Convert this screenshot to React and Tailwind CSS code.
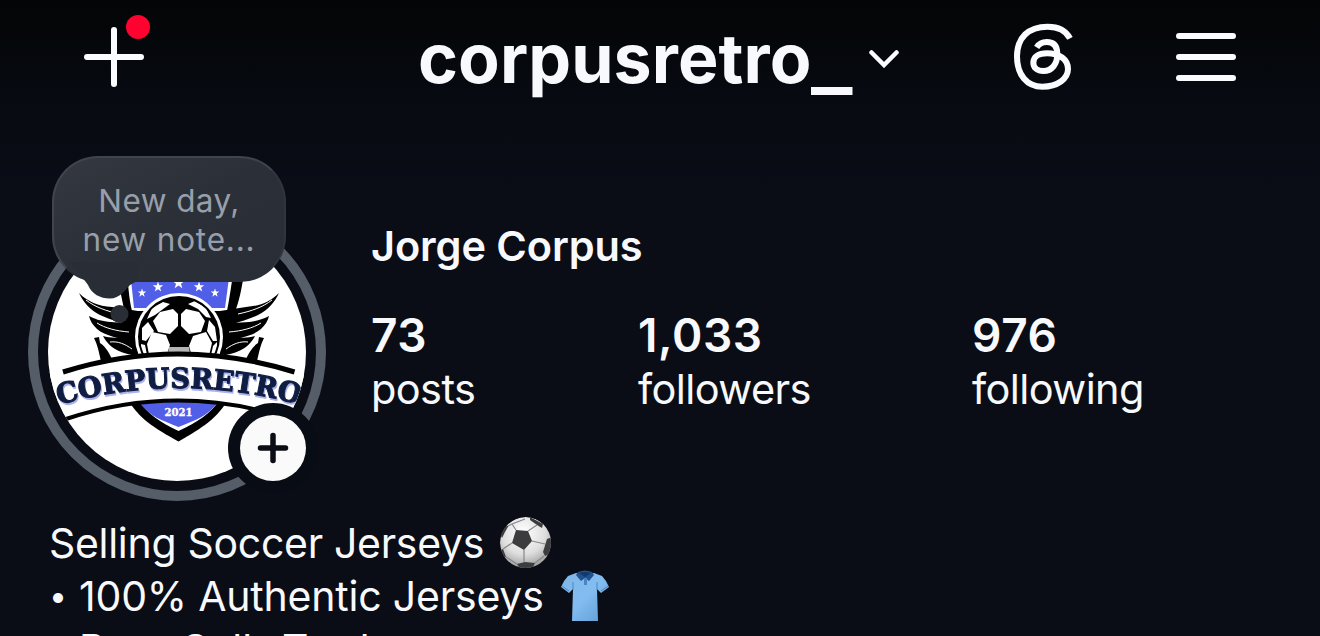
// src/App.jsx
import React from "react";

const STATS = [
  { value: "73", label: "posts", width: "w-[267px]" },
  { value: "1,033", label: "followers", width: "w-[334px]" },
  { value: "976", label: "following", width: "w-[200px]" },
];

const STARS = [
  [142, 293, 4.5],
  [158, 287, 5.5],
  [178.5, 283, 6.5],
  [199, 287, 5.5],
  [215, 293, 4.5],
];

function starPoints([cx, cy, r]) {
  return Array.from({ length: 10 }, (_, i) => {
    const radius = i % 2 ? r * 0.4 : r;
    const angle = (Math.PI / 5) * i - Math.PI / 2;
    return `${cx + radius * Math.cos(angle)},${cy + radius * Math.sin(angle)}`;
  }).join(" ");
}

function ThreadsIcon() {
  return (
    <svg viewBox="0 0 240 240" className="size-20" fill="none" stroke="#fafcff" strokeWidth="18">
      <path d="M195 70C182 45 158 35 128 35C70 35 36 68 36 124C36 180 66 215 112 215C158 215 189 191 189 162C189 133 163 115 126 115C99 115 85 127 85 143C85 158 97 168 115 168C141 168 157 147 157 117C157 93 146 81 125 81C111 81 102 86 95 97" />
    </svg>
  );
}

function Wing() {
  return (
    <g>
      <g fill="#000">
        <path d="M79 293C88 302 98 306 112 307L138 311V327C122 323 111 320 100 315C90 310 83 302 79 293Z" />
        <path d="M89 316C100 322 112 323 138 323V341C120 339 105 336 97 329C93 325 90 321 89 316Z" />
        <path d="M103 336C112 339 120 337 138 337V356C124 354 110 350 103 336Z" />
        <path d="M94 338L99 337L100 343C106 347 109 353 112 359L101 361C99 353 98 346 94 338Z" />
      </g>
      <path
        fill="none"
        stroke="#fff"
        strokeWidth="1"
        d="M86 300C95 307 106 311 120 314M97 323C105 328 116 331 129 332M110 342C118 341 125 344 132 349"
      />
    </g>
  );
}

function ClubLogo() {
  return (
    <svg viewBox="28 203 298 298" className="block size-[298px]">
      <defs>
        <clipPath id="avatar">
          <circle cx="177" cy="352" r="129" />
        </clipPath>
        <clipPath id="ball">
          <circle cx="179" cy="337" r="39" />
        </clipPath>
        <path id="ribbon" d="M59 405Q178 371 301 405" />
      </defs>
      <circle cx="177" cy="352" r="144" fill="none" stroke="#545d68" strokeWidth="10" />
      <circle cx="177" cy="352" r="129" fill="#fff" />
      <g clipPath="url(#avatar)">
        {/* Shield top */}
        <path fill="#000" d="M116 270H245C242 284 241 295 236 309L222 325H137L124 309C121 295 119 284 116 270Z" />
        <path fill="#fff" d="M127 270H234C231 285 230 297 227 311H132C129 299 128 284 127 270Z" />
        <path fill="#515ee8" d="M130 270H230L225 308H134Z" />
        {STARS.map((star) => (
          <polygon key={star[0]} points={starPoints(star)} fill="#fff" />
        ))}

        {/* Wings */}
        <Wing />
        <g transform="matrix(-1 0 0 1 358 0)">
          <Wing />
        </g>

        {/* Ball */}
        <circle cx="179" cy="337" r="44" fill="#fff" />
        <circle cx="179" cy="337" r="41" fill="#000" />
        <g clipPath="url(#ball)">
          <g fill="#fff">
            <path d="M160 312L173 309L178 314V326L170 334L158 332L153 321Z" />
            <path d="M181 314L186 309L199 312L205 321L201 332L189 334L181 326Z" />
            <path d="M152 332L166 335L170 345L165 360L150 360L147 344Z" />
            <path d="M206 332L193 336L189 346L193 360L208 360L212 343Z" />
            <path d="M142 328L148 322L154 331L146 341L142 340Z" />
            <path d="M209 320L215 327L217 341L213 341L207 331Z" />
            <path d="M147 319L152 308L163 302L170 304L155 315Z" />
            <path d="M188 304L195 301L206 308L211 318L206 317L198 309Z" />
            <path d="M141 344L145 345L148 360H141Z" />
            <path d="M217 342L213 346L210 360H218Z" />
          </g>
          <path fill="#b5b5b5" d="M169 347H189L191 360H167Z" />
        </g>

        {/* Shield bottom */}
        <path fill="#000" d="M127 398H229C218 418 202 428 178.500 441.500C154 428 138 418 127 398Z" />
        <path fill="#fff" d="M137 398H221C210 415 197 422 178.500 431C160 422 148 415 137 398Z" />
        <path fill="#515ee8" d="M139 402H218C208 416 196 420 178.500 427C161 420 149 416 139 402Z" />
        <text
          x="178.500"
          y="415.500"
          textAnchor="middle"
          textLength="28"
          lengthAdjust="spacingAndGlyphs"
          stroke="#fff"
          strokeWidth="0.4"
          className="fill-white font-['DejaVu_Serif'] text-[11px] font-bold"
        >
          2021
        </text>

        {/* Ribbon */}
        <path fill="#fff" d="M40 372L63 371Q178 333 295 371L320 380V420H288Q178 380 68 418H40Z" />
        <path fill="none" stroke="#000" strokeWidth="5" d="M63 372Q178 336 294.500 372" />
        <path fill="none" stroke="#000" strokeWidth="4" d="M66 419Q178 382 290 419" />
        <text
          fill="#101d42"
          stroke="#101d42"
          strokeWidth="1.1"
          className="font-['DejaVu_Serif'] text-[28px] font-bold drop-shadow-[1.5px_2px_0_#aab0ea]"
        >
          <textPath href="#ribbon" textLength="243" lengthAdjust="spacingAndGlyphs">
            CORPUSRETRO
          </textPath>
        </text>
      </g>
      {/* Add story badge */}
      <circle cx="273" cy="448" r="45" fill="#080c14" />
      <circle cx="273" cy="448" r="33" fill="#fafafa" />
      <path d="M260.500 448H285.500M273 435.500V460.500" stroke="#0a0d14" strokeWidth="5.500" strokeLinecap="round" />
    </svg>
  );
}

function NoteBubble() {
  return (
    <div className="absolute left-6 -top-[47px] h-[126px] w-[234px] rounded-[46px] border-2 border-[#40454d] border-r-[#30353d] border-b-[#292e36] bg-linear-to-br from-[#343840] via-[#2b3038] to-[#292e36] pt-[23px] text-center text-[31.500px] leading-[39px] text-[#989faa]">
      <div className="tracking-[0.4px]">New day,</div>
      <div className="tracking-[0.8px]">new note...</div>
      <svg viewBox="70 260 70 70" className="absolute top-[102px] left-4 size-[70px]" fill="#292e36">
        <path d="M70 262C78 274 84 279 88 285C92 294 100 298.500 110 298.500C120 298.500 125 290 130 285L139 280V262Z" />
        <circle cx="119.500" cy="314" r="9" />
      </svg>
    </div>
  );
}

function SoccerBall() {
  return (
    <svg viewBox="0 0 52 52" className="size-[52px]">
      <defs>
        <radialGradient id="shine" cx="45%" cy="30%" r="70%">
          <stop offset="0" stopColor="#fff" />
          <stop offset="0.6" stopColor="#dedede" />
          <stop offset="1" stopColor="#999" />
        </radialGradient>
        <clipPath id="emoji">
          <circle cx="25.500" cy="25.500" r="25.500" />
        </clipPath>
      </defs>
      <g clipPath="url(#emoji)">
        <circle cx="26" cy="26" r="26" fill="url(#shine)" />
        <g fill="#3c3c3e">
          <path d="M16 13L28 14L32 24L24 33L12 26Z" />
          <path d="M30 0L43 7L42 11L37 8L30 3Z" />
          <path d="M52 20L47 22L43 35L45 39L52 36Z" />
          <path d="M17 47L25 45L35 46L32 52H20Z" />
          <path d="M0 17L5 10L9 8L5 15L2 21Z" />
          <path d="M0 33L3 32L6 40L3 40Z" />
        </g>
        <path
          d="M16 13L12 7M12 7L8 9M12 7L25 2M28 14L37 8M32 24L45 27M24 33V45M12 26L3 32M6 40L17 47M35 46L44 39"
          fill="none"
          stroke="#888"
          strokeWidth="1.200"
        />
      </g>
    </svg>
  );
}

function PoloShirt() {
  return (
    <svg viewBox="0 0 48 52" className="h-[52px] w-12">
      <defs>
        <linearGradient id="cloth" x2="1" y2="1">
          <stop stopColor="#7fb6e8" />
          <stop offset="0.5" stopColor="#83bdf0" />
          <stop offset="1" stopColor="#5d9ad3" />
        </linearGradient>
      </defs>
      <path fill="url(#cloth)" d="M15 3L33 3L41 6Q45 10 48 17L40 23L36 19L37 51H11L12 19L8 23L0 17Q3 10 7 6Z" />
      <path fill="none" stroke="#4b88c2" d="M12 12V20M36 12V20M1 16L8 21M47 16L40 21" />
      <path fill="#1f528e" d="M17 2Q24 -1 31 2L33 5L28 11L24 8L20 11L15 5Z" />
      <path fill="#143a6b" d="M18 3Q24 1 30 3L24 7Z" />
      <path fill="#4985c0" d="M23 8H26V15H23Z" />
    </svg>
  );
}

export default function App() {
  return (
    <div className="h-[636px] w-[1320px] overflow-hidden bg-[#0a0d15] bg-linear-to-b from-[#030506] via-[#070a11] via-15% to-[#0a0d15] to-30% font-['Inter',sans-serif] text-[#f7f9fc]">
      {/* Top bar */}
      <header className="flex h-[114px] items-center">
        <div className="relative ml-[84px] size-[60px]">
          <svg viewBox="0 0 60 60" className="size-[60px]" stroke="#fafcff" strokeWidth="6" strokeLinecap="round">
            <path d="M3 30H57M30 3V57" />
          </svg>
          <span className="absolute -top-3 left-[42px] size-6 rounded-full bg-[#ff0230]" />
        </div>
        <h1 className="mt-px ml-[274px] w-[451px] text-[68px] leading-[114px] font-bold tracking-[0.1px] whitespace-nowrap">
          corpusretro<span className="inline-block origin-bottom-left translate-y-[6px] scale-x-[1.28] scale-y-[1.05]">_</span>
        </h1>
        <svg viewBox="0 0 30 18" className="mt-[3px] h-[18px] w-[30px]" fill="none" stroke="#fafcff" strokeWidth="4.500" strokeLinecap="round">
          <path d="M2.500 2.500L15 15L27.500 2.500" />
        </svg>
        <div className="ml-[106px] -mt-1">
          <ThreadsIcon />
        </div>
        <svg viewBox="0 0 60 48" className="ml-[91px] h-12 w-[60px]" stroke="#fafcff" strokeWidth="6" strokeLinecap="round">
          <path d="M3 3H57M3 24H57M3 45H57" />
        </svg>
      </header>

      {/* Avatar and stats */}
      <section className="flex pt-[89px] pl-7">
        <div className="relative size-[298px] shrink-0">
          <ClubLogo />
          <NoteBubble />
        </div>
        <div className="pt-4 pl-[45px]">
          <h2 className="text-[41.500px] leading-[54px] font-semibold tracking-[-0.1px]">Jorge Corpus</h2>
          <div className="mt-[35px] flex">
            {STATS.map((stat) => (
              <div key={stat.label} className={stat.width}>
                <div className="text-[46px] leading-[54px] font-semibold tracking-[0.6px]">{stat.value}</div>
                <div className="text-[41.500px] leading-[54px] tracking-[-0.6px]">{stat.label}</div>
              </div>
            ))}
          </div>
        </div>
      </section>

      {/* Bio */}
      <section className="mt-[15px] pl-[49px] text-[41px] leading-[54px] whitespace-nowrap">
        <div className="flex h-[54px] items-center">
          <span className="-mt-px w-[451px] tracking-[-0.3px]">Selling Soccer Jerseys</span>
          <SoccerBall />
        </div>
        <div className="-mt-px flex h-[54px] items-center">
          <span className="w-[30px] text-[32px]">•</span>
          <span className="w-[482px] tracking-[-0.2px]">100% Authentic Jerseys</span>
          <PoloShirt />
        </div>
        <div className="-mt-px flex h-[54px] items-center">
          <span className="w-[30px] text-[32px]">•</span>
          <span className="w-[103px]">Buy,</span>
          <span className="w-[100px]">Sell,</span>
          <span>Trade</span>
        </div>
      </section>
    </div>
  );
}
